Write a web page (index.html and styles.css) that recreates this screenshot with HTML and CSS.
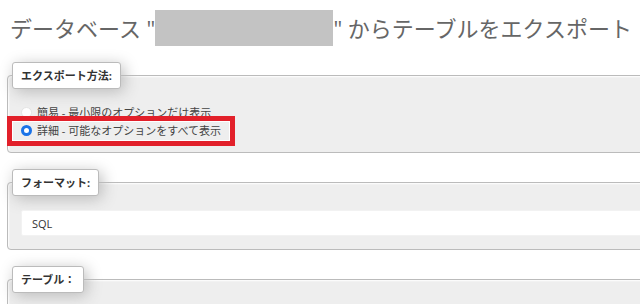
FILE: index.html
```html
<!DOCTYPE html>
<html lang="ja">
<head>
<meta charset="UTF-8">
<meta name="viewport" content="width=device-width, initial-scale=1.0">
<title>エクスポート</title>
<link rel="stylesheet" href="styles.css">
</head>
<body>
<div class="page">
  <h2 class="title">データベース "<span class="masked"></span>" からテーブルをエクスポート</h2>

  <fieldset class="group">
    <legend>エクスポート方法:</legend>
    <label class="option">
      <input type="radio" name="method" value="quick">
      <span>簡易 - 最小限のオプションだけ表示</span>
    </label>
    <label class="option marked">
      <input type="radio" name="method" value="custom" checked>
      <span>詳細 - 可能なオプションをすべて表示</span>
    </label>
  </fieldset>

  <fieldset class="group">
    <legend>フォーマット:</legend>
    <select class="format" name="format">
      <option value="sql">SQL</option>
    </select>
  </fieldset>

  <fieldset class="group">
    <legend>テーブル：</legend>
    <div class="tables"></div>
  </fieldset>
</div>
</body>
</html>
```

FILE: styles.css
```css
html, body {
  margin: 0;
  overflow: hidden;
  background: #fff;
}

body {
  font-family: "Open Sans", "Noto Sans CJK JP", sans-serif;
  color: #333;
}

.page {
  width: 760px;
  padding: 10px 0 0 7px;
}

.title {
  margin: 0 0 16px 3px;
  height: 36px;
  line-height: 36px;
  font-size: 22px;
  font-weight: normal;
  color: #666;
  white-space: nowrap;
}

.masked {
  display: inline-block;
  width: 178px;
  height: 36px;
  vertical-align: top;
  background: #c3c3c3;
}

.group {
  margin: 0 0 16px 0;
  padding: 14px 13px 13px 13px;
  border: 1px solid #bbb;
  border-radius: 4px;
  background: #eee;
  box-shadow: 1px 1px 2px #fff inset;
}

.group legend {
  margin-left: -9px;
  padding: 5px 8px;
  font-size: 11px;
  line-height: 15px;
  font-weight: bold;
  color: #333;
  background: #fff;
  border: 1px solid #bbb;
  border-radius: 3px;
  box-shadow: 3px 3px 15px #bbb;
}

.option {
  position: relative;
  display: flex;
  align-items: center;
  gap: 5px;
  height: 18px;
  font-size: 11px;
  color: #444;
}

.option input {
  appearance: none;
  margin: 0;
  width: 11px;
  height: 11px;
  border: 1px solid #e4e4e4;
  border-radius: 50%;
  background: #fff;
}

.option input:checked {
  border: 3px solid #1a73e8;
  background: #fff;
}

.marked::after {
  content: "";
  position: absolute;
  left: -14px;
  top: -5px;
  width: 228px;
  height: 30px;
  box-sizing: border-box;
  border: 5px solid #e2202a;
  box-shadow: 0 0 0 1px #fff inset;
}

.format {
  appearance: none;
  display: block;
  width: 100%;
  height: 26px;
  padding: 0 10px;
  font-family: "Open Sans", "Noto Sans CJK JP", sans-serif;
  font-size: 11px;
  color: #333;
  background: #fff;
  border: 1px solid #f2f2f2;
  border-radius: 2px;
}

.tables {
  height: 40px;
}
```
